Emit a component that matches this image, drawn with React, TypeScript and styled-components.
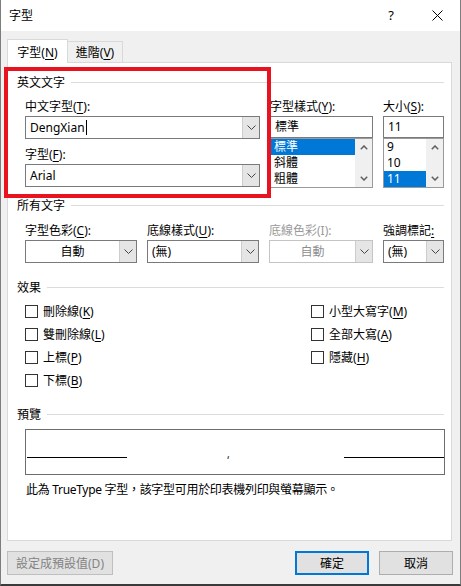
import * as React from "react";
import styled, { createGlobalStyle } from "styled-components";

const GlobalStyle = createGlobalStyle`
  html, body {
    margin: 0;
    padding: 0;
  }
  body {
    background: #2f2f2f;
    font-family: "Noto Sans", "Noto Sans CJK TC", sans-serif;
    font-size: 12px;
    line-height: 15px;
    color: #000;
    overflow: hidden;
  }
  u {
    text-decoration-thickness: 1px;
    text-underline-offset: 2px;
  }
`;

const SWindow = styled.div`
  width: 461px;
  height: 586px;
  box-sizing: border-box;
  display: flex;
  flex-direction: column;
  background: #f0f0f0;
  border-left: 1px solid #7d7d7d;
  border-right: 1px solid #7d7d7d;
  border-bottom: 2px solid #3a3a3a;
`;

const STitleBar = styled.div`
  height: 31px;
  flex-shrink: 0;
  display: flex;
  align-items: center;
  background: #fff;
`;

const STitle = styled.div`
  flex: 1;
  padding-left: 8px;
`;

const STitleButton = styled.div`
  width: 46px;
  height: 31px;
  display: flex;
  align-items: center;
  justify-content: center;
  font-size: 13px;
`;

const SBody = styled.div`
  flex: 1;
  display: flex;
  flex-direction: column;
  padding: 8px 7px 0 6px;
`;

const STabs = styled.div`
  display: flex;
  align-items: flex-end;
  height: 24px;
  margin-bottom: -1px;
  position: relative;
  z-index: 1;
`;

const STab = styled.div<{ $active?: boolean }>`
  box-sizing: border-box;
  display: flex;
  align-items: center;
  justify-content: center;
  width: ${(p) => (p.$active ? "61px" : "55px")};
  height: ${(p) => (p.$active ? "24px" : "21px")};
  margin-bottom: ${(p) => (p.$active ? "0" : "1px")};
  background: ${(p) => (p.$active ? "#fff" : "#f0f0f0")};
  border: 1px solid #d9d9d9;
  border-bottom: none;
  ${(p) => (p.$active ? "" : "border-left: none;")}
  padding-top: ${(p) => (p.$active ? "1px" : "0")};
`;

const SPanel = styled.div`
  position: relative;
  width: 445px;
  height: 479px;
  box-sizing: border-box;
  background: #fff;
  border: 1px solid #d9d9d9;
  padding: 0 7px 0 9px;
`;

const SHeader = styled.div<{ $top: number }>`
  display: flex;
  align-items: center;
  gap: 6px;
  height: 15px;
  margin-top: ${(p) => p.$top}px;
  &::after {
    content: "";
    flex: 1;
    height: 1px;
    background: #dcdcdc;
  }
`;

const SFontGrid = styled.div`
  display: grid;
  grid-template-columns: 235px 103px 61px;
  column-gap: 10px;
  margin: 9px 0 0 8px;
`;

const SColorGrid = styled.div`
  display: grid;
  grid-template-columns: 112px 112px 104px 61px;
  column-gap: 10px;
  margin: 10px 0 0 8px;
`;

const SColumn = styled.div`
  display: flex;
  flex-direction: column;
`;

const SLabel = styled.div<{ $gap?: number; $disabled?: boolean }>`
  white-space: nowrap;
  margin-top: ${(p) => p.$gap ?? 0}px;
  margin-bottom: 2px;
  color: ${(p) => (p.$disabled ? "#9a9a9a" : "#000")};
`;

const SCombo = styled.div<{ $disabled?: boolean }>`
  height: 23px;
  box-sizing: border-box;
  display: flex;
  background: #fff;
  border: 1px solid ${(p) => (p.$disabled ? "#c4c4c4" : "#7a7a7a")};
  color: ${(p) => (p.$disabled ? "#8d8d8d" : "#000")};
`;

const SComboText = styled.div<{ $center?: boolean }>`
  flex: 1;
  display: flex;
  align-items: center;
  justify-content: ${(p) => (p.$center ? "center" : "flex-start")};
  padding-left: ${(p) => (p.$center ? "0" : "4px")};
  white-space: nowrap;
`;

const SCaret = styled.span`
  display: inline-block;
  width: 1px;
  height: 15px;
  margin-left: 1px;
  background: #000;
`;

const SComboButton = styled.div`
  width: 17px;
  box-sizing: border-box;
  display: flex;
  align-items: center;
  justify-content: center;
  background: #e5e5e5;
  border-left: 1px solid #cdcdcd;
`;

const SInput = styled.div`
  height: 22px;
  box-sizing: border-box;
  border: 1px solid #7a7a7a;
  padding-left: 4px;
  line-height: 20px;
`;

const SList = styled.div`
  height: 50px;
  box-sizing: border-box;
  display: flex;
  border: 1px solid #9a9a9a;
  overflow: hidden;
`;

const SListItems = styled.div`
  flex: 1;
`;

const SListItem = styled.div<{ $selected?: boolean }>`
  height: 16px;
  padding-left: 3px;
  line-height: 16px;
  background: ${(p) => (p.$selected ? "#0078d7" : "transparent")};
  color: ${(p) => (p.$selected ? "#fff" : "#000")};
`;

const SScrollbar = styled.div`
  width: 17px;
  display: flex;
  flex-direction: column;
  justify-content: space-between;
  background: #f0f0f0;
`;

const SArrow = styled.div`
  height: 17px;
  display: flex;
  align-items: center;
  justify-content: center;
`;

const SChecks = styled.div`
  display: grid;
  grid-template-columns: 286px auto;
  margin: 5px 0 0 8px;
`;

const SCheckRow = styled.div`
  height: 23px;
  display: flex;
  align-items: center;
  gap: 5px;
  white-space: nowrap;
`;

const SBox = styled.span`
  width: 13px;
  height: 13px;
  box-sizing: border-box;
  border: 1px solid #333;
  background: #fff;
`;

const SPreview = styled.div`
  width: 420px;
  height: 46px;
  box-sizing: border-box;
  margin: 7px 0 0 8px;
  border: 1px solid #6d6d6d;
  display: flex;
  align-items: flex-end;
  padding: 0 0 16px 1px;
`;

const SPreviewLine = styled.span`
  width: 100px;
  height: 1px;
  background: #000;
`;

const SComma = styled.span`
  margin-left: 100px;
  flex: 1;
  line-height: 8px;
  font-size: 10px;
`;

const SDesc = styled.div`
  margin: 7px 0 0 9px;
  white-space: nowrap;
  letter-spacing: -0.3px;
`;

const SMarker = styled.div`
  position: absolute;
  left: -4px;
  top: 4px;
  width: 267px;
  height: 131px;
  box-sizing: border-box;
  border: 4px solid #e8131f;
  pointer-events: none;
`;

const SFooter = styled.div`
  display: flex;
  margin-top: 10px;
  gap: 10px;
`;

const SButton = styled.div<{ $w: number; $primary?: boolean; $disabled?: boolean }>`
  width: ${(p) => p.$w}px;
  height: 24px;
  box-sizing: border-box;
  display: flex;
  align-items: center;
  justify-content: center;
  background: #e1e1e1;
  border: ${(p) =>
    p.$primary ? "2px solid #0078d7" : `1px solid ${p.$disabled ? "#bfbfbf" : "#adadad"}`};
  color: ${(p) => (p.$disabled ? "#838383" : "#000")};
  white-space: nowrap;
`;

const SSpacer = styled.div`
  flex: 1;
`;

const Chevron = () => (
  <svg width="9" height="5" viewBox="0 0 9 5">
    <path d="M0.5 0.5 L4.5 4.5 L8.5 0.5" fill="none" stroke="#444" strokeWidth="1" />
  </svg>
);

const ScrollArrow = ({ up }: { up?: boolean }) => (
  <svg width="8" height="5" viewBox="0 0 8 5">
    <path
      d={up ? "M0.8 4.3 L4 1 L7.2 4.3" : "M0.8 0.7 L4 4 L7.2 0.7"}
      fill="none"
      stroke="#606060"
      strokeWidth="1.5"
    />
  </svg>
);

const Combo = ({
  value,
  center,
  disabled,
  caret,
}: {
  value: string;
  center?: boolean;
  disabled?: boolean;
  caret?: boolean;
}) => (
  <SCombo $disabled={disabled}>
    <SComboText $center={center}>
      {value}
      {caret && <SCaret />}
    </SComboText>
    <SComboButton>
      <Chevron />
    </SComboButton>
  </SCombo>
);

const ListBox = ({ items, selected }: { items: string[]; selected: number }) => (
  <SList>
    <SListItems>
      {items.map((it, i) => (
        <SListItem key={it} $selected={i === selected}>
          {it}
        </SListItem>
      ))}
    </SListItems>
    <SScrollbar>
      <SArrow>
        <ScrollArrow up />
      </SArrow>
      <SArrow>
        <ScrollArrow />
      </SArrow>
    </SScrollbar>
  </SList>
);

const Check = ({ label, k }: { label: string; k: string }) => (
  <SCheckRow>
    <SBox />
    <span>
      {label}(<u>{k}</u>)
    </span>
  </SCheckRow>
);

const App = () => (
  <SWindow>
    <GlobalStyle />
    <STitleBar>
      <STitle>字型</STitle>
      <STitleButton>?</STitleButton>
      <STitleButton>
        <svg width="11" height="11" viewBox="0 0 11 11">
          <path d="M0.5 0.5 L10.5 10.5 M10.5 0.5 L0.5 10.5" stroke="#000" strokeWidth="1" />
        </svg>
      </STitleButton>
    </STitleBar>
    <SBody>
      <STabs>
        <STab $active>
          字型(<u>N</u>)
        </STab>
        <STab>
          進階(<u>V</u>)
        </STab>
      </STabs>
      <SPanel>
        <SHeader $top={12}>英文文字</SHeader>
        <SFontGrid>
          <SColumn>
            <SLabel>
              中文字型(<u>T</u>):
            </SLabel>
            <Combo value="DengXian" caret />
            <SLabel $gap={8}>
              字型(<u>F</u>):
            </SLabel>
            <Combo value="Arial" />
          </SColumn>
          <SColumn>
            <SLabel>
              字型樣式(<u>Y</u>):
            </SLabel>
            <SInput>標準</SInput>
            <ListBox items={["標準", "斜體", "粗體"]} selected={0} />
          </SColumn>
          <SColumn>
            <SLabel>
              大小(<u>S</u>):
            </SLabel>
            <SInput>11</SInput>
            <ListBox items={["9", "10", "11"]} selected={2} />
          </SColumn>
        </SFontGrid>

        <SHeader $top={10}>所有文字</SHeader>
        <SColorGrid>
          <SColumn>
            <SLabel>
              字型色彩(<u>C</u>):
            </SLabel>
            <Combo value="自動" center />
          </SColumn>
          <SColumn>
            <SLabel>
              底線樣式(<u>U</u>):
            </SLabel>
            <Combo value="(無)" />
          </SColumn>
          <SColumn>
            <SLabel $disabled>底線色彩(I):</SLabel>
            <Combo value="自動" center disabled />
          </SColumn>
          <SColumn>
            <SLabel>
              強調標記<u>:</u>
            </SLabel>
            <Combo value="(無)" />
          </SColumn>
        </SColorGrid>

        <SHeader $top={17}>效果</SHeader>
        <SChecks>
          <SColumn>
            <Check label="刪除線" k="K" />
            <Check label="雙刪除線" k="L" />
            <Check label="上標" k="P" />
            <Check label="下標" k="B" />
          </SColumn>
          <SColumn>
            <Check label="小型大寫字" k="M" />
            <Check label="全部大寫" k="A" />
            <Check label="隱藏" k="H" />
          </SColumn>
        </SChecks>

        <SHeader $top={15}>預覽</SHeader>
        <SPreview>
          <SPreviewLine />
          <SComma>,</SComma>
          <SPreviewLine />
        </SPreview>
        <SDesc>此為 TrueType 字型，該字型可用於印表機列印與螢幕顯示。</SDesc>
        <SMarker />
      </SPanel>
      <SFooter>
        <SButton $w={106} $disabled>
          設定成預設值(D)
        </SButton>
        <SSpacer />
        <SButton $w={74} $primary>
          確定
        </SButton>
        <SButton $w={74}>取消</SButton>
      </SFooter>
    </SBody>
  </SWindow>
);

export default App;
